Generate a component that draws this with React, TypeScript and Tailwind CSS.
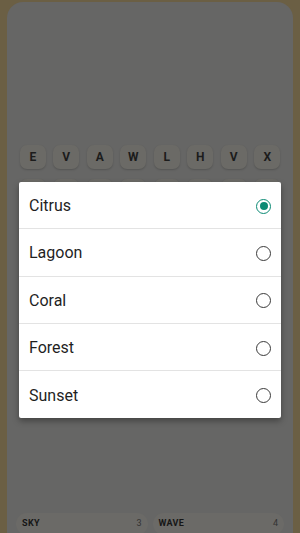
import React from 'react'

const ROW1 = ['E', 'V', 'A', 'W', 'L', 'H', 'V', 'X']
const ROW2 = ['O', 'K', 'I', 'N', 'R', 'I', 'S', 'T']
const THEMES = ['Citrus', 'Lagoon', 'Coral', 'Forest', 'Sunset']

function Tile({ ch }: { ch: string }) {
  return (
    <div className="flex h-[24px] w-[26px] items-center justify-center rounded-[7px] bg-[#6b6a66] text-[12px] font-bold text-[#1c1c1c] shadow-[0_1px_2px_rgba(0,0,0,0.18)]">
      {ch}
    </div>
  )
}

function Radio({ on }: { on: boolean }) {
  return (
    <span
      className={`flex h-[15px] w-[15px] items-center justify-center rounded-full border-[1.5px] ${
        on ? 'border-[#0b8a74]' : 'border-[#3a3a3a]'
      }`}
    >
      {on && <span className="h-[8px] w-[8px] rounded-full bg-[#0b8a74]" />}
    </span>
  )
}

export default function App() {
  return (
    <div
      className="relative h-[533px] w-[300px] overflow-hidden bg-[#6b5f44] px-[7px] pt-[2px]"
      style={{ fontFamily: 'Roboto, "Noto Sans", sans-serif' }}
    >
      {/* board (already dimmed by the scrim) */}
      <div className="flex h-[560px] flex-col rounded-[16px] bg-[#666665] px-[9px]">
        <div className="h-[143px]" />
        <div className="grid grid-cols-8 justify-items-center gap-y-[10px]">
          {ROW1.map((c, i) => (
            <Tile key={'a' + i} ch={c} />
          ))}
          {ROW2.map((c, i) => (
            <Tile key={'b' + i} ch={c} />
          ))}
        </div>
        <div className="flex-1" />
      </div>

      {/* word chips */}
      <div className="absolute left-[16px] right-[16px] top-[513px] grid grid-cols-2 gap-[5px]">
        {[
          ['SKY', 3],
          ['WAVE', 4],
        ].map(([w, n]) => (
          <div key={w} className="flex h-[22px] items-center justify-between rounded-full bg-[#6b6a67] px-[6px] pb-[1px]">
            <span className="text-[9px] font-bold tracking-[0.04em] text-[#161616]">{w}</span>
            <span className="text-[9px] text-[#333]">{n}</span>
          </div>
        ))}
      </div>

      {/* theme picker dialog */}
      <div className="absolute left-[19px] top-[182px] w-[262px] rounded-[2px] bg-white shadow-[0_3px_6px_rgba(0,0,0,0.35)]">
        {THEMES.map((t, i) => (
          <div
            key={t}
            className={`flex h-[47.3px] items-center justify-between pl-[10px] pr-[10px] pt-[2px] ${
              i < THEMES.length - 1 ? 'border-b border-[#e3e3e3]' : ''
            }`}
          >
            <span className="text-[16px] text-[#1f1f1f]">{t}</span>
            <Radio on={i === 0} />
          </div>
        ))}
      </div>
    </div>
  )
}
